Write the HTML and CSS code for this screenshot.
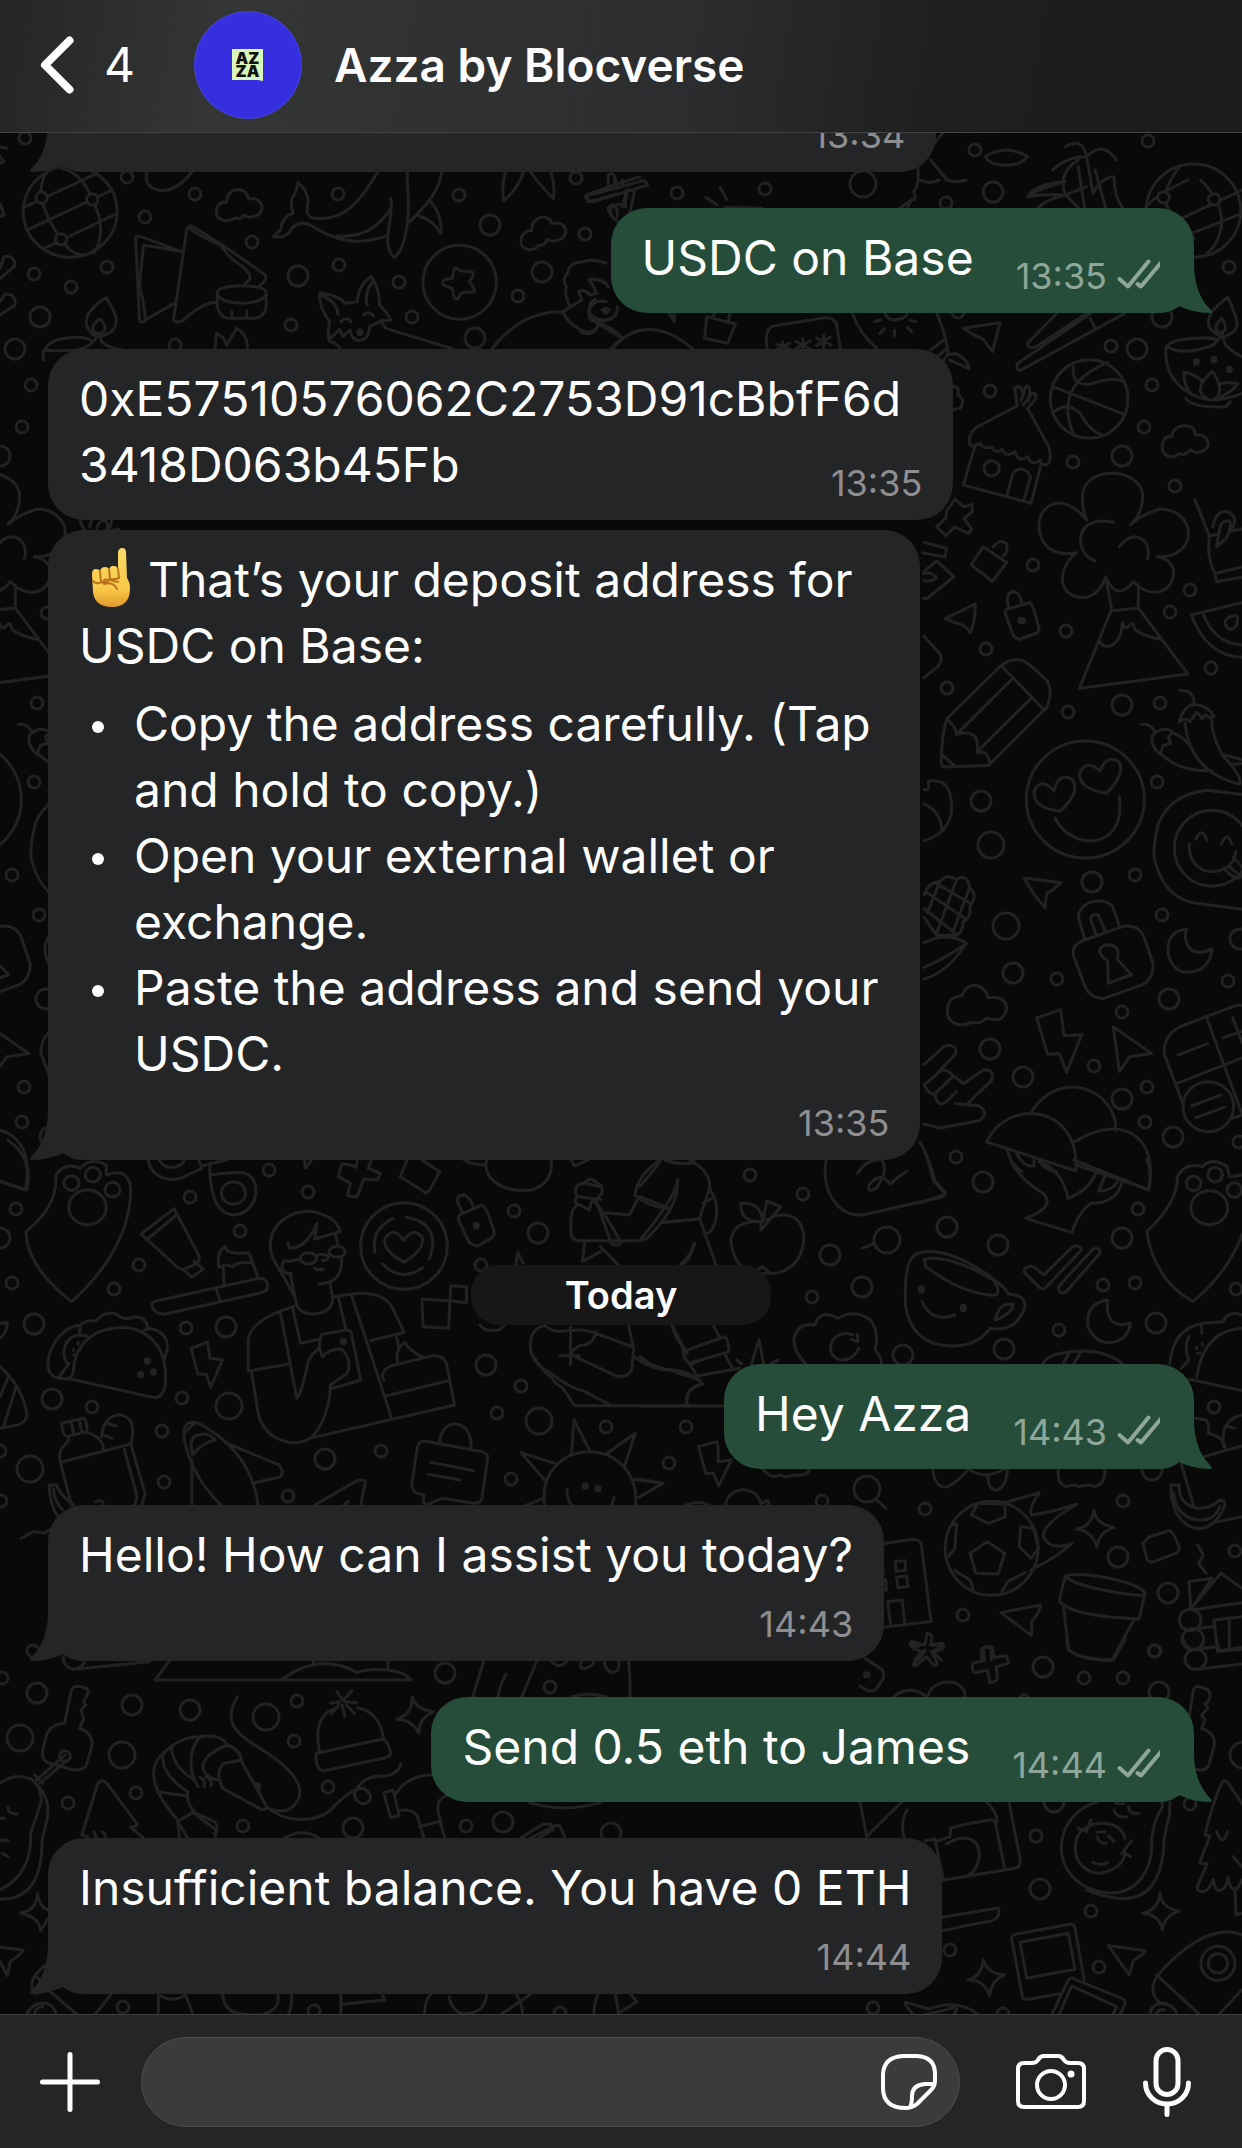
FILE: index.html
```html
<!DOCTYPE html>
<html lang="en">

<head>
  <meta charset="utf-8" />
  <title>Azza by Blocverse</title>
  <meta name="viewport" content="width=device-width, initial-scale=1">
  <link rel="stylesheet" href="styles.css">
</head>

<body>
  <svg class="defs" aria-hidden="true">
    <symbol id="tail" viewBox="0 0 52 62">
      <path d="M34 0V10C34 36 41 49 51 59Q53 62 50 62C38 62 28 59 19 55C14 59 8 62 0 62V0Z" />
    </symbol>
    <symbol id="ticks" viewBox="0 0 48 30">
      <path d="M2.500 20L11 27.500L31.500 2.500M20.500 25L24 27.500L45 2.500" fill="none" stroke="currentColor" stroke-width="4" stroke-linecap="round" stroke-linejoin="round" />
    </symbol>
  </svg>

  <header class="header">
    <a href="#" class="back" aria-label="Back, 4 unread chats">
      <svg class="back-icon" viewBox="0 0 34 58" aria-hidden="true"><path d="M29.500 4.500L5 29L29.500 53.500" /></svg>
      <span class="unread">4</span>
    </a>
    <svg class="avatar" viewBox="0 0 108 108" aria-hidden="true">
      <circle cx="54" cy="54" r="53.500" fill="#352fe0" stroke="#4a45e4" />
      <path d="M38 38H69V70L64 69H38Z" fill="#d9f7b8" />
      <text x="53.500" y="53">AZ</text>
      <text x="53.500" y="66">ZA</text>
    </svg>
    <h1 class="title">Azza by Blocverse</h1>
  </header>

  <main class="chat">
    <svg class="wallpaper" aria-hidden="true">
      <defs>
        <marker id="ring-s" markerUnits="userSpaceOnUse" markerWidth="40" markerHeight="40" refX="20" refY="20"><circle cx="20" cy="20" r="6" /></marker>
        <marker id="ring-m" markerUnits="userSpaceOnUse" markerWidth="40" markerHeight="40" refX="20" refY="20"><circle cx="20" cy="20" r="10" /></marker>
        <marker id="ring-l" markerUnits="userSpaceOnUse" markerWidth="40" markerHeight="40" refX="20" refY="20"><circle cx="20" cy="20" r="13" /></marker>
      </defs>
      <g class="doodles" transform="translate(0 -133)">
        <!-- small, medium and large rings -->
        <polyline class="rings-s" points="25,138 127,177 195,194 145,217 107,267 34,274 71,287 252,242 338,194 339,265 399,282 412,317 291,325 175,345 459,195 576,178 585,234 518,296 677,193 765,189 946,203 1229,267 1111,346 990,391 1152,385 1144,427 1073,462 1175,486 958,312 31,385 22,427 47,613 1033,565 1190,590 1170,612 1066,631 986,649 1211,668 947,688 1068,712 1160,703 1157,782 1135,875 1162,915 1057,979 1228,981 1122,1012 1094,1066 1147,1087 1145,1122 1239,1142 956,1157 34,782 37,703 12,875 39,915 24,1087 22,1122 16,1209 12,1283 114,1289 139,1265 190,1197 269,1170 308,1192 240,1231 186,1328 182,1398 92,1407 162,1431 164,1482 288,1496 381,1451 514,1211 481,1265 521,1386 497,1413 511,1479 606,1427 686,1427 669,1463 0,1451 1,1501 750,1175 803,1194 1138,1209 812,1297 1103,1285 1135,1283 1059,1330 1236,1289 822,1501 925,1509 1123,1501 963,1615 1154,1651 1235,1551 1214,1407 33,1651 2,1678 297,1701 294,1741 136,1793 68,1803 328,1787 243,1826 550,1687 466,1826 123,2007 314,2011 560,2013 1084,1678 1123,1678 1155,1651 1036,1836 1091,1911 1099,1967 950,1950 873,2008 1003,2014 1190,1804 975,150 1148,141" />
        <polyline class="rings-m" points="40,317 15,349 298,276 490,225 542,272 475,338 993,192 1162,317 1137,349 1122,456 0,456 1122,705 981,801 1092,882 1013,973 1169,999 46,999 990,1049 1023,1077 1122,1099 1173,1137 50,1137 1240,939 34,1324 52,1399 226,1327 538,1233 486,1365 325,1459 0,1238 983,1182 830,1255 947,1227 998,1245 1122,1238 862,1287 903,1355 1004,1349 1156,1323 1118,1557 1168,1593 1152,1470 37,1693 132,1705 190,1710 445,1673 353,1828 503,1822 611,1833 1043,1667 1159,1692 1040,1889 1054,1802" />
        <polyline class="rings-l" points="863,184 991,845 1006,926 229,1406 30,1469 539,1421 887,1240 867,1489 20,1738 266,1717 122,1755 1243,1755" />

        <!-- globe, whale, samosas, corgi, badge -->
        <g id="top-left" transform="translate(0 120) scale(.4082 .3333)">
          <ellipse cx="172" cy="275" rx="115" ry="137" />
          <path d="M62 260L238 160M70 328L275 210M108 385L284 282M100 230Q100 150 135 140Q200 150 226 238Q265 330 230 400M102 235Q110 290 150 358Q175 405 205 405" />
          <ellipse cx="102" cy="233" rx="14" ry="17" class="solid" /><ellipse cx="226" cy="238" rx="14" ry="17" class="solid" /><ellipse cx="150" cy="358" rx="14" ry="17" class="solid" />
          <path d="M360 156C350 200 380 214 405 211Q440 205 470 156" />
          <path d="M556 246C552 200 607 198 608 236C650 228 654 290 612 292Q603 290 597 286Q588 300 576 294C560 308 526 305 530 268Q534 245 556 246Z" />
          <path d="M1303 332C1300 285 1350 280 1352 312C1390 295 1400 355 1362 362Q1350 366 1342 357Q1335 378 1320 376C1305 400 1270 390 1277 355Q1284 330 1303 332Z" />
          <path d="M925 156C880 250 840 305 770 295Q745 290 755 250Q755 210 730 188Q728 215 715 235Q712 260 718 280Q690 290 688 330Q670 345 670 350H690Q705 348 715 325Q735 300 760 315Q830 370 890 363Q930 358 950 345M825 347Q910 360 960 260M957 235C965 260 948 330 950 370Q955 405 966 412Q990 390 998 310C1006 250 995 200 998 156M1004 305C1050 250 1075 210 1083 156M1052 240Q1085 285 1080 340Q1060 300 1027 288M1238 156Q1228 200 1234 242Q1270 205 1282 156M1300 156Q1325 200 1356 235Q1360 195 1350 156" />
          <path d="M332 360Q330 345 345 350L446 395L352 375Q345 440 342 500Q355 560 356 600L430 548M332 360L342 600Q345 612 356 602M425 600L458 325Q465 312 475 322L545 375L650 465Q655 475 645 488L635 498M425 600Q430 612 450 600Q500 545 530 548M465 325Q490 350 540 375Q565 420 590 435Q620 465 610 480L600 492" />
          <path d="M532 518C532 490 652 490 652 518C652 560 532 560 532 518V560Q540 595 560 595H625Q650 590 652 560V518M568 595V572M604 595V572" />
          <ellipse cx="1126" cy="487" rx="90" ry="111" />
          <path d="M1112 450Q1115 435 1126 452L1152 455Q1165 457 1157 470L1150 485L1163 510Q1160 522 1145 515L1130 520L1122 535Q1112 540 1110 520L1108 505L1087 495Q1080 485 1092 478L1108 475Z" />
          <path d="M835 690Q828 670 808 665Q800 640 808 605Q780 560 783 520Q830 525 845 550L875 545Q880 490 910 470Q930 510 930 555Q950 580 957 600L932 602L945 625L1110 687M790 527Q825 545 828 582M915 480Q890 520 900 555M810 655L832 628L840 650L858 630Q860 660 880 662Q905 658 905 620L930 605M835 605Q848 588 860 605M890 585Q905 570 915 588" />
          <path class="dot" d="M882 635V638M1484 570V572" />
          <path d="M260 533Q205 575 212 615Q222 650 245 648Q290 640 284 590Q275 560 260 533M244 597Q218 620 232 638Q255 645 258 622Q255 605 244 597M238 650Q225 680 190 690Q130 695 110 690M110 690C120 645 220 645 225 665M246 655Q250 680 300 690M106 690V720" />
          <path d="M527 687L530 640L548 655L555 675L580 625Q608 645 606 687M1205 687Q1280 570 1378 576Q1395 620 1440 638Q1465 632 1465 610Q1500 620 1524 655M1500 687Q1530 640 1570 630M1378 576L1425 540L1418 515Q1430 505 1445 525L1462 520L1445 480Q1470 470 1490 500M1398 562Q1380 520 1388 500Q1375 480 1390 460Q1395 425 1430 425Q1450 415 1485 430M1485 545Q1455 535 1443 570Q1440 605 1480 603Q1515 595 1512 560" />
          <path d="M1440 238Q1430 225 1445 220L1568 170M1440 245L1490 230L1510 222M1490 195V165Q1505 150 1510 190M1525 260L1535 210M1500 290Q1480 265 1500 255Q1515 260 1512 290" />
          <path d="M0 80L16 85M0 130L10 125L0 110M0 445L10 410Q40 405 35 440L0 475M0 545L12 523Q40 520 37 555L0 585M0 250L10 285L0 290" />
        </g>

        <!-- palms, parachute, cocktail, basketball, hut -->
        <g id="top-right" transform="translate(580 180) scale(.4222 .3333)">
          <path d="M12 50Q20 70 40 62L160 15Q155 -5 140 5L12 50M80 0L90 25M100 0V18M130 30L115 115M115 30Q105 60 108 80Q90 65 72 85Q70 110 90 125M298 52L325 75M332 22L347 58M345 82L430 85" />
          <path d="M620 -141Q650 -90 720 -95Q770 -105 785 -141M800 -40Q805 20 790 35Q800 60 785 60L758 84M785 60L775 84M805 0Q830 15 850 0M800 -40Q830 -100 860 -141M830 -60L870 0Q890 10 915 0M960 -70Q1010 -110 1060 -70Q1040 -40 1000 -45Q970 -45 960 -70M1060 50Q1080 10 1150 5Q1080 30 1060 50Q1100 40 1150 45Q1110 55 1085 82M1150 45Q1130 -20 1180 -60M1150 45L1180 82M1180 -40L1195 84M1220 -30L1245 84M1150 45L1200 20M1265 -10Q1265 50 1285 84M1215 40Q1230 0 1260 -10M1150 -100Q1190 -130 1200 -70Q1240 -120 1270 -60M1200 -70Q1150 -70 1120 -30M1200 -70L1215 40" />
          <ellipse cx="1453" cy="92" rx="112" ry="140" />
          <path d="M1345 75Q1370 40 1440 0M1400 130L1568 30M1430 170L1568 100M1382 52Q1395 0 1420 -40M1382 60Q1410 130 1455 175M1470 0Q1520 60 1520 130Q1515 190 1485 220" />
          <ellipse cx="1382" cy="52" rx="14" ry="17" class="solid" /><ellipse cx="1502" cy="58" rx="14" ry="17" class="solid" />
          <path d="M645 398Q660 460 705 507M845 398Q870 480 872 520L858 550M830 510L862 480M845 530L870 505M872 525L890 520Q920 540 922 567L875 540M722 398Q730 425 750 418Q775 415 775 398M698 425L712 420M710 460L722 445M745 468V450M785 455L775 442M795 425L782 420" />
          <path d="M443 507Q435 445 460 437L580 413Q600 412 607 430L617 507M480 485V507M465 492L497 507M497 490L468 505M528 475V507M512 485L545 507M545 483L512 505M577 465V503M560 475L595 495M593 472L560 497M300 410L368 432L350 490L295 475ZM315 408L320 398M352 420L355 398M210 398L223 425V398M72 507Q160 390 267 507M22 400Q20 420 35 425M40 428L100 475M0 455Q35 475 45 430M52 390H70M20 300Q35 290 62 310M35 358Q20 365 22 400Q50 435 80 410" />
          <path d="M908 445L995 428L977 515L955 478Q930 465 908 445ZM1130 400L1060 490Q1060 510 1080 500L1200 400M1290 400L1045 570Q1030 570 1037 550L1210 400M1208 415L1220 443" />
          <path d="M1535 352Q1480 400 1490 440Q1510 475 1530 468Q1570 450 1550 400ZM1520 415Q1495 445 1515 458Q1540 455 1520 415M1388 500C1410 470 1500 470 1505 480Q1520 478 1522 460M1390 500Q1430 530 1500 495L1512 478M1388 500C1380 600 1440 650 1490 660Q1530 660 1568 640M1525 470Q1520 500 1568 530M1430 577Q1455 580 1475 605Q1485 590 1497 573Q1510 595 1513 612Q1540 605 1558 612Q1540 640 1510 655M1475 605Q1460 640 1485 655M1513 612Q1520 640 1505 655M1430 577Q1430 620 1450 645M1435 655Q1450 685 1530 680L1540 665" />
          <path class="dot" d="M1460 545V547M1502 538V540M1538 567V569" />
          <ellipse cx="1206" cy="657" rx="92" ry="118" />
          <path d="M1120 620L1290 703M1250 548C1150 600 1140 680 1170 765M1168 560Q1165 620 1210 612Q1260 590 1290 605M1120 700Q1150 660 1185 700Q1205 750 1235 765" />
          <path d="M1035 678L1030 625Q1045 605 1050 650M1045 660L1057 618Q1070 615 1062 665M1050 675L1070 640Q1095 640 1060 685L1110 800Q1120 840 1105 855Q1090 855 1090 840Q1070 860 1060 830Q1040 850 1030 815Q1010 835 1000 808Q985 825 975 800Q955 810 948 790Q920 810 922 780Q925 750 945 738L1035 678M935 800L908 915L1068 970L1092 855M1012 945L1025 880Q1050 850 1067 890L1052 960" />
          <ellipse cx="975" cy="865" rx="18" ry="23" />
          <path d="M1402 770C1400 735 1455 720 1458 765C1495 760 1500 815 1460 818L1445 810Q1430 830 1420 820C1395 845 1375 820 1380 790Q1385 765 1402 770ZM880 620Q900 615 895 645Q915 660 900 685L880 690" />
        </g>

        <!-- tree, volcano, pencil, smileys, padlock, mushrooms -->
        <g id="mid-right" transform="translate(840 500) scale(.3333 .4464)">
          <path d="M290 60L318 40L320 25L345 -2L370 15L395 10L398 25L372 42L395 65L385 75L365 68L345 60L318 80ZM460 105Q480 85 500 98Q505 115 490 125M430 105L500 140L457 182L393 145ZM252 95L320 108L315 128L248 118M252 160L290 137L342 172L262 220L250 220M252 180Q270 185 290 175Q275 160 250 165" />
          <path d="M740 45Q725 20 728 -15C740 -75 890 -75 908 -15Q910 30 872 55M740 45C660 -30 580 20 600 75Q620 130 710 118C640 160 660 225 740 218Q780 210 797 172Q830 230 880 183C940 230 1010 200 1000 155Q990 130 952 127C1080 130 1070 20 960 20Q900 35 872 55M820 50C700 30 700 120 765 136M838 105C880 60 940 90 922 132M797 172L816 248L895 242L895 190M813 248L718 422L1044 390L895 242M778 315Q790 335 815 325Q845 315 847 275Q855 295 870 280Q880 270 885 290Q910 305 960 312" />
          <path d="M316 265L406 233Q405 280 390 297Q380 280 345 275ZM505 238Q495 208 520 205Q540 208 545 230M500 245L570 230Q580 235 596 285Q600 295 590 298L540 312Q525 312 518 300L498 258Q492 248 500 245M252 305L300 345Q308 360 295 372L252 398" />
          <path class="dot" d="M543 270H548" />
          <path d="M320 490L485 370Q530 345 570 370L622 405Q640 430 620 465L445 595L310 598Q302 595 304 580Q305 530 320 490ZM485 372L612 470M515 402L350 525M572 445L410 565M320 490Q345 505 350 525Q420 510 412 565Q445 560 450 590M308 572L345 596" />
          <ellipse cx="736" cy="671" rx="177" ry="131" />
          <path d="M662 697Q575 690 583 650Q605 620 642 652Q655 610 695 625Q725 650 662 697ZM800 657Q710 645 720 610Q740 580 780 607Q800 570 835 585Q860 610 800 657ZM645 712C690 785 860 790 838 665" />
          <path d="M1020 427Q1065 425 1062 460M1018 497Q1030 460 1065 458Q1105 460 1122 485L1105 487Q1095 475 1088 490L1070 475L1050 497Q1035 485 1018 497M1035 500Q1050 610 1200 637Q1205 615 1150 575Q1115 530 1115 490M905 503Q930 500 945 520M960 570Q925 545 940 525Q970 505 1000 520L985 530L992 545L970 550ZM965 570Q1020 610 1115 606M1000 522Q1030 530 1055 555M1150 570L1206 582M1206 590L1175 592" />
          <path d="M1206 660L1100 650Q990 660 955 725Q935 790 945 810Q975 890 1060 902L1206 917" />
          <ellipse cx="1116" cy="780" rx="113" ry="85" />
          <path d="M1048 770C1040 850 1180 850 1188 787M1068 760Q1085 730 1101 762M1145 770Q1160 740 1175 770M1150 825L1180 845Q1200 850 1206 840M1180 800L1206 822M1166 820L1190 835" />
          <path d="M252 648Q270 655 265 630Q340 620 335 700Q320 750 252 763M252 680Q305 700 305 738M252 885Q265 855 300 855Q320 835 350 850Q380 835 390 870Q415 885 390 910Q395 935 370 945Q365 975 345 975H290L252 935M262 880L380 940M290 860L395 905M252 915L345 970M350 850L290 970M300 855L262 925M388 870L340 965M252 992Q320 965 380 993Q320 1060 252 1073M252 1047Q310 1030 380 993" />
          <path d="M553 847L663 857Q630 880 620 880L615 913Q575 880 553 847ZM735 985L715 935C720 890 810 890 820 915L838 955M768 972L752 940Q755 925 775 930L797 968M700 1020Q695 995 735 985L850 955Q900 950 915 985L940 1040Q940 1070 910 1085L790 1117Q750 1115 735 1090ZM803 1032C755 1010 790 990 820 998Q840 1005 832 1030L875 1063L805 1083ZM1040 962C960 960 970 1060 1045 1058Q1110 1055 1116 1005Q1050 1030 1035 980Z" />
          <path d="M365 1110Q380 1085 410 1087Q440 1095 445 1115Q500 1110 500 1140Q490 1175 440 1160Q420 1175 395 1170Q350 1185 325 1160Q310 1115 365 1110ZM590 1160L662 1142L672 1200L725 1198L680 1282L658 1240L623 1242ZM820 1180L935 1240L870 1247L838 1280Z" />
          <path d="M252 1265L310 1225Q350 1215 348 1240L285 1290Q310 1265 340 1290L370 1307L430 1277Q465 1275 455 1300L383 1352M285 1290L252 1310Q270 1335 285 1330L340 1290M285 1330Q290 1360 315 1350L350 1325M345 1352L415 1357Q450 1370 420 1390L300 1407L252 1398" />
          <path d="M440 1438C500 1340 720 1350 708 1503ZM575 1370C660 1270 830 1320 828 1413M705 1437C850 1370 960 1430 925 1545L710 1490M502 1457Q510 1485 545 1505M600 1480Q610 1500 650 1505M530 1463Q550 1495 582 1492V1478" />
          <path d="M240 1438Q265 1470 285 1525L315 1555L240 1575" />
          <path d="M1206 1132Q1190 1130 1170 1137L1020 1180Q970 1200 972 1240L1030 1355M1100 1160L1206 1375M1012 1307L1206 1250M1015 1243L1103 1218M1150 1205L1206 1190M1178 1160L1206 1215M1175 1385L1206 1378" />
          <ellipse cx="1105" cy="1359" rx="76" ry="56" />
          <path d="M1055 1357L1142 1333M1067 1384L1154 1360" />
          <path d="M1065 0L1108 80Q1100 130 1125 165L1130 183L1206 173M1108 80L1130 78M1125 165L1206 150M1118 60Q1130 20 1165 27Q1200 40 1170 70L1206 65M1130 105L1160 85Q1180 50 1165 47Q1145 45 1140 62ZM1054 257L1206 230M1054 257Q1100 350 1206 352M1088 252Q1120 320 1206 325M1180 260Q1200 255 1190 280Q1170 300 1155 278Q1155 262 1180 260" />
        </g>
        <use href="#mid-right" x="-1123" />

        <!-- paw, toothpaste, cake, man with phone, taco, sun -->
        <g transform="translate(0 1140) scale(.4464 .3333)">
          <path d="M58 275Q130 200 125 105Q145 65 180 85Q200 50 238 75V105Q290 80 293 150Q290 330 160 485Q60 380 58 275Z" />
          <ellipse cx="160" cy="129" rx="17" ry="22" /><ellipse cx="208" cy="104" rx="17" ry="22" /><ellipse cx="252" cy="149" rx="17" ry="22" /><ellipse cx="196" cy="202" rx="42" ry="52" />
          <path d="M18 0C60 40 70 100 60 150L0 125M332 60C340 120 390 130 420 105L452 85L445 60M357 60Q365 85 390 82Q410 75 413 60M452 78L507 60M470 75V105Q520 95 545 98C590 110 580 225 522 225C485 220 475 170 470 105" />
          <ellipse cx="523" cy="159" rx="27" ry="34" />
          <path d="M316 282L390 206L445 345Q450 365 435 375L410 388Q395 385 388 370ZM328 300L398 222M435 365L455 387L430 412L412 390M490 380Q485 330 505 320Q505 345 555 338Q565 350 563 368Q530 365 520 380Q505 370 497 380Q488 380 490 380M500 385L502 435M565 365L578 415M340 495Q340 483 360 480L580 415Q600 415 600 440Q598 455 580 460L370 522Q345 525 340 495M485 450L493 483" />
          <path d="M682 60L684 85L698 60M765 72Q780 70 798 82L800 60M832 60L825 85L852 100L845 120L815 118L800 170L778 168L785 130L758 110L765 72M912 60L897 110L955 160Q965 150 985 95L945 60M1040 60Q1060 75 1085 75M1090 60C1080 110 1120 160 1190 150Q1240 130 1235 60M1280 60L1287 78L1318 60" />
          <path d="M606 330C600 230 680 200 715 220Q755 235 762 275L705 297L710 250Q695 295 680 310Q665 325 648 325L645 308M606 330Q610 360 640 420L660 470M652 362L672 358M650 365Q630 355 632 385Q638 405 652 400M650 400L662 478Q665 520 700 522Q745 520 745 475L740 432M765 350Q770 430 715 432M752 285L757 315M705 385Q712 393 724 387M722 360Q732 365 735 350M710 347Q720 338 735 348" />
          <ellipse cx="691" cy="355" rx="18" ry="17" /><ellipse cx="755" cy="335" rx="18" ry="16" />
          <path d="M658 500Q560 540 556 600V693L648 672M628 517L665 775Q675 760 688 680Q690 650 715 625L718 590Q720 582 735 580L775 570Q785 570 787 580L808 720L740 747M655 500L673 610L715 598M722 650Q740 625 765 627Q790 660 778 700L740 735Q738 830 700 890Q680 910 650 908Q580 890 575 790L563 693M722 650L715 620M758 472L775 570M748 470L800 460Q860 455 880 505L905 578L830 602M788 468L877 833M888 588L893 620M700 893L1018 795L1000 670Q990 640 960 650L875 678Q850 695 860 720M890 665Q885 625 908 607Q915 630 945 650M867 767L1005 722" />
          <path class="dot" d="M769 604V606M330 662V664M344 695V697M315 703V705" />
          <ellipse cx="905" cy="318" rx="97" ry="130" />
          <path d="M905 367Q850 325 865 290Q885 260 904 302Q925 260 945 290Q955 325 905 367ZM840 337Q830 270 880 235M910 232Q990 250 962 357M857 372Q900 430 947 382M1026 190Q1020 165 1040 165Q1055 175 1060 200M1026 190L1035 215M1030 225L1080 195Q1090 200 1107 275Q1108 290 1100 295L1070 318Q1060 318 1050 305L1027 240Q1025 228 1030 225M945 478L1008 482L1005 565L948 560ZM1008 482L1010 437L1045 440V488Z" />
          <path class="dot" d="M1067 256V258" />
          <path d="M130 715C80 700 120 560 180 555Q190 540 215 543Q235 510 260 522Q280 545 300 530Q330 530 330 565Q375 570 375 625L368 660M150 715L345 773Q365 775 370 735C380 600 310 550 255 565C190 575 165 640 165 690M180 555L178 585Q145 590 143 640Q145 670 155 670L130 715L152 717Q165 710 165 685M195 587L178 585M320 573L335 565M175 607V613M165 628V632M180 625V630M165 645H172" />
          <path d="M428 625L465 606L470 655L498 660L472 742L462 703L443 702ZM0 550L17 548Q15 580 0 595M0 680Q50 740 60 820Q60 850 40 855L0 865M18 712L0 770M35 745L8 860" />
          <path d="M138 850L185 835Q195 835 195 875L150 890Q140 885 138 850M160 850L165 880M178 845L183 875M153 892Q155 905 145 915Q130 930 135 965L160 1095M195 878Q230 890 232 930M228 890C230 820 280 805 295 850Q300 880 293 910M240 850L260 858M232 885L252 895M137 967L293 912L325 1060L318 1095M277 920L307 1070L302 1095M110 1035H128Q130 1060 165 1095M110 1035Q112 1100 130 1130M120 1045Q120 1080 140 1110M215 1085Q230 1075 232 1095M48 1195L75 1175L100 1180L110 1170" />
          <path d="M413 900C405 830 440 840 470 870C530 920 570 1000 578 1095M413 900Q430 1010 495 1095M413 880L435 850M432 945Q420 890 445 885Q465 875 482 900Q450 910 432 945M505 908L625 975Q640 1000 625 1012L565 1030M430 960V1095M705 1095L800 1022Q820 1015 818 1030L808 1095M770 1095L780 1085" />
          <path d="M985 910C985 830 1060 830 1055 925M950 903L1080 935Q1095 940 1092 960L1080 1070Q1080 1090 1060 1090L990 1075L955 1095Q945 1090 950 1065Q920 1060 923 1030L935 920Q940 903 950 903M965 967L1060 992M960 1003L1030 1020" />
          <path d="M1220 1095C1210 1000 1260 935 1320 935C1380 935 1430 1000 1424 1095M1280 945L1286 840L1322 935M1358 942L1423 880L1400 975M1417 1018L1485 1030L1424 1077M1248 972L1167 938L1223 1025M1218 1075L1180 1095M1270 1047Q1270 1080 1280 1095M1376 1073L1370 1095" />
          <path class="dot" d="M1311 1037V1039M1340 1045V1047" />
          <path d="M1290 145Q1295 130 1310 130Q1320 105 1338 130Q1352 135 1348 160L1335 180M1310 130L1345 140M1290 145Q1288 165 1295 170L1345 178M1290 175Q1285 195 1300 195L1320 210L1325 185M1290 200Q1275 210 1280 290Q1290 305 1310 302H1430Q1450 300 1460 280Q1520 200 1518 120M1330 180Q1360 230 1390 305Q1390 320 1370 312L1335 180M1358 218L1410 225L1430 175M1422 165Q1430 100 1480 60M1422 165Q1450 200 1493 205M1480 248L1568 237M1490 60Q1520 75 1550 70L1555 60M1310 305L1305 365M1345 320L1385 375M1305 365L1345 335M1155 375L1160 337L1172 370M1555 310Q1550 350 1530 375M1075 555Q1090 580 1120 568L1130 555" />
          <path d="M1190 640Q1180 570 1220 557Q1240 580 1270 572Q1310 565 1335 580L1420 622L1415 690Q1405 715 1380 708L1280 645M1335 575Q1330 610 1310 615Q1290 615 1280 640M1255 647H1298M1278 560V672M1408 555L1418 620M1420 650Q1460 690 1500 690L1568 720M1190 640Q1200 680 1235 700Q1270 740 1310 755L1370 797M1190 640Q1220 700 1235 712Q1250 740 1260 742L1287 797H1568M1505 555Q1520 600 1540 640M1530 625Q1535 675 1550 672L1568 660M1568 735Q1530 750 1540 797" />
        </g>

        <!-- apple, cup, cloud, football, pot, log cabin -->
        <g transform="translate(640 1160) scale(.3839 .3333)">
          <path d="M315 185Q245 180 237 240Q240 310 290 340H355Q425 320 427 230Q420 150 350 168L330 180M315 185Q260 185 263 130Q315 125 320 185L330 123L367 140L315 210ZM290 340L320 320L340 340M485 0C470 100 520 170 580 165L790 110Q800 100 790 90L765 65L750 0M567 40Q590 -5 630 0Q650 30 615 85Q590 100 597 75Q615 45 637 55L653 72Q670 50 695 35M578 265L607 252M130 0Q190 40 180 90L155 175L198 315M180 85Q210 130 195 190Q185 220 175 220M165 130L187 115M55 187L155 177M97 60Q95 110 0 240M75 145L0 110M143 250Q130 290 105 315M0 80L50 10" />
          <path d="M692 440Q685 300 722 280Q790 255 900 340Q950 380 960 402Q1005 405 1003 440Q980 520 912 505Q880 555 820 558Q710 560 692 440ZM740 298Q800 280 920 360Q950 410 910 405Q830 395 745 320ZM948 435L973 432Q970 460 925 480Q930 450 948 435M735 425Q760 490 820 465" />
          <path class="dot" d="M733 385V389M842 442V446" />
          <path d="M1000 335Q1005 315 1025 320L1052 345L1125 262Q1145 250 1150 270L1055 385Q1048 390 1040 382ZM1090 380L1180 267Q1200 260 1198 280L1110 395Q1090 408 1090 380M1218 420Q1160 430 1167 500Q1190 560 1240 545Q1275 530 1277 490Q1210 510 1218 420Z" />
          <path d="M432 612Q380 550 415 505Q430 490 455 495Q470 445 515 475Q560 445 600 480Q625 520 612 570Q630 590 628 612M570 565C545 625 480 600 500 545Q520 510 555 525M550 538L567 545V522M252 600L265 612M290 612L310 540L322 612M340 612L360 600M1050 612Q1060 575 1160 573Q1220 575 1257 612M1102 612L1118 578M1130 612L1147 578" />
          <path d="M112 575L220 530Q230 535 232 575L128 610Q115 600 112 575M130 612L148 648L260 625M220 580L242 628M82 495Q95 540 118 570M190 495L208 532M0 590Q40 630 90 630Q140 640 163 672Q120 680 122 735M0 738H225" />
          <path d="M152 860L200 845Q205 850 203 905L238 900L205 978L190 938L172 942ZM0 958L60 970L0 1010M222 1035C230 980 300 970 315 1030L332 1022Q340 1030 332 1035M120 1035Q150 1020 180 1035M320 927Q340 960 365 945Q380 955 400 945Q440 950 440 927M762 927Q770 990 800 980Q825 970 855 927M860 930Q900 960 950 927M907 945Q905 990 930 990Q955 980 957 930M1090 927Q1085 970 1110 980Q1130 970 1145 980Q1165 970 1185 980Q1215 970 1210 927M615 1018L640 1045" />
          <path d="M965 0Q990 60 1050 100Q1085 140 1005 175L1125 218Q1145 150 1175 130Q1240 130 1255 70M1040 5Q1100 30 1115 115Q1170 90 1187 40M1130 0L1325 90Q1335 40 1320 0M1210 50L1195 93Q1225 95 1245 65M1320 215Q1400 130 1400 50Q1420 5 1465 20Q1490 -10 1530 20L1535 50L1568 45M1320 215Q1340 360 1440 425Q1530 340 1568 225" />
          <ellipse cx="1442" cy="70" rx="19" ry="22" /><ellipse cx="1498" cy="44" rx="19" ry="22" /><ellipse cx="1548" cy="90" rx="19" ry="22" /><ellipse cx="1483" cy="143" rx="48" ry="51" />
          <ellipse cx="916" cy="1165" rx="121" ry="141" />
          <path d="M905 1145L950 1180L933 1242L875 1240L860 1180ZM880 1030L950 1032L952 1070L908 1090L863 1065ZM812 1095L825 1092L820 1165L803 1190M992 1100L1025 1105L1038 1165L1018 1195L988 1160ZM820 1232L860 1260L868 1290M942 1298L958 1265L1003 1238M945 1030L1040 998Q1010 1050 1020 1065Q1060 1060 1138 1033Q1050 1090 1050 1130Q1070 1175 1125 1150Q1090 1190 1018 1230M1183 1052Q1185 1090 1235 1103Q1195 1115 1190 1162Q1180 1115 1137 1108Q1175 1100 1183 1052ZM1310 1150L1325 1132L1378 1112Q1390 1115 1405 1165Q1405 1175 1395 1180L1340 1205Q1325 1210 1320 1195Z" />
          <path d="M630 1152L710 1138Q730 1138 733 1155L758 1385L632 1402M630 1207L635 1237M665 1205L690 1202L692 1230L667 1235ZM630 1260L640 1258L642 1290L632 1290M668 1252L695 1248L698 1280L672 1283ZM645 1325L683 1320L690 1392M645 1325L653 1398M940 1358L1043 1335Q1045 1350 1020 1385V1427ZM748 1420Q765 1420 757 1455L790 1460Q790 1475 762 1475L785 1500M748 1420L742 1455L705 1450Q700 1465 735 1475L715 1500M890 1500V1465Q910 1455 915 1470V1500" />
          <path d="M1108 1248C1150 1230 1320 1270 1315 1305C1280 1310 1130 1280 1108 1248ZM1108 1250Q1095 1300 1093 1325Q1130 1370 1300 1377L1315 1302M1103 1343L1117 1470Q1150 1500 1230 1500L1287 1378M1453 1155L1467 1185L1455 1210L1475 1240M1383 975H1405Q1400 1030 1450 1045Q1490 1045 1510 1020Q1525 1020 1523 1035C1490 1150 1380 1120 1383 975M1390 1000Q1400 1085 1470 1080Q1500 1075 1510 1040M1505 1085L1568 1070M1410 912L1443 1040M1435 1345L1430 1265L1490 1255L1440 1340L1513 1240L1568 1285M1435 1350L1568 1328M1455 1405L1495 1400M1465 1465L1500 1460M1495 1380L1568 1370M1495 1380L1505 1475L1568 1468M1535 1378V1472" />
          <ellipse cx="1433" cy="1380" rx="28" ry="32" /><ellipse cx="1440" cy="1438" rx="28" ry="32" />
          <path d="M1380 612Q1390 500 1470 490L1520 485Q1530 450 1568 465M1463 520V490M1430 530Q1415 560 1430 600M1430 600L1410 625M1430 658L1568 692M1450 650Q1470 510 1568 505M1445 775L1475 780Q1485 800 1480 820M1480 820Q1520 830 1525 865M1470 890L1568 858M1450 560V566M1465 550V556M1452 580H1460M1520 860Q1510 780 1568 765M1530 800L1550 805" />
        </g>

        <!-- key, prawn, hat, hammer, tree -->
        <g transform="translate(0 1640) scale(.4082 .3333)">
          <path d="M155 50Q155 85 185 88Q205 80 207 63M185 88L365 65M380 120L415 63M380 120H1007Q990 95 950 90Q900 85 875 97Q780 35 690 120M768 63V72M950 63V88M1158 171L1185 63M1220 171Q1225 130 1240 103M1278 171L1315 63M1350 63Q1370 90 1390 63M1425 63Q1415 90 1435 85Q1455 75 1455 63M1480 63Q1485 100 1505 97Q1520 90 1515 63M1540 63Q1545 120 1543 171M1400 171Q1440 155 1485 171" />
          <path d="M158 250L175 150Q180 135 200 140Q220 145 215 160L205 185L210 195L198 210L205 235L195 265Q230 280 225 320L210 380Q195 395 175 388L120 370Q100 360 105 330L115 280Q130 250 158 250ZM160 345L85 425M165 360L98 430M75 415L95 440M85 405L105 430" />
          <ellipse cx="159" cy="349" rx="13" ry="17" />
          <path d="M0 430Q40 395 80 420Q105 450 100 490L75 580Q80 700 0 750M95 440Q125 480 115 540L103 600Q105 750 30 775L0 778M20 500Q20 525 42 522M0 535H10M0 600L20 602M5 640L20 650M200 585L240 430Q250 415 262 430L335 550Q338 560 320 562L352 594M200 585L215 590M230 575L237 594M250 575Q260 580 257 594" />
          <path d="M435 540C370 450 360 380 400 340Q440 290 490 290Q540 280 558 315Q590 330 592 365L652 498Q655 510 640 508L545 445Q525 390 550 370L592 360M400 340Q390 400 460 455M420 325Q425 380 470 415M490 290Q455 340 475 420M558 315Q485 350 500 395Q515 420 540 420M385 455L458 468M435 545L472 518L530 570L528 594M460 455Q455 490 480 520L525 545Q540 565 525 580M440 594L435 545L460 594M475 415L485 440M490 412Q505 420 500 440M505 410Q522 420 517 437M582 170C540 250 590 290 630 320C700 370 750 430 730 480Q710 520 680 512Q660 510 652 500C700 550 770 550 810 510Q860 445 890 445Q910 460 908 475Q900 495 885 490Q865 480 870 455Q890 405 940 408Q975 405 983 370M650 495L625 430" />
          <path class="dot" d="M632 437V441" />
          <path d="M783 335Q765 230 820 205M875 203Q930 215 940 297M775 340L935 298Q950 297 957 340Q955 350 940 355L795 392Q770 390 775 340M840 180L825 155M842 180L862 152M845 185L875 188M838 195L845 230M830 195L812 222M832 185L810 190M848 195L868 220M1010 172Q1020 210 1062 215Q1025 235 1027 280Q1010 240 972 237Q1010 225 1010 172Z" />
          <path d="M940 458L963 450L978 527L957 533ZM970 460Q1000 405 1060 404M978 512Q1020 500 1028 550L1038 594M1078 545L1090 594M1028 560L1080 543Q1060 480 1095 467M1275 594L1330 553H1350L1355 570M1300 594L1355 560L1370 555L1383 590M1320 594L1350 572M1298 488Q1380 520 1470 488M698 594Q740 562 782 594" />
          <path d="M92 760Q95 800 118 810M92 760Q90 810 50 820Q95 830 100 872L118 835M0 922L57 930Q55 940 25 965L18 1007L0 965M118 970Q60 1020 85 1062L110 1050M118 1050L190 1125M90 1010L118 1050M65 1125Q80 1085 115 1090Q135 1100 138 1125M85 1125Q85 1100 105 1100M232 1125L272 1063M388 1062V1125M390 1065Q420 1090 455 1065L473 1125M545 1063C550 1130 600 1125 640 1125Q690 1110 680 1063M715 1063Q715 1110 705 1125M835 1063V1125M940 1080L840 1093M935 1063L943 1080M1040 1125Q1040 1080 1055 1063M1100 1070Q1110 1125 1145 1122Q1190 1115 1192 1063M1225 1125L1300 1063M1265 1063Q1280 1090 1280 1125M1455 1125Q1455 1090 1465 1063M1508 1063L1515 1120L1560 1085L1545 1063" />
        </g>

        <!-- pictures, avocado baby, fir, rocket -->
        <g transform="translate(860 1640) scale(.3333)">
          <path d="M175 20L150 15L155 3L180 12M195 30L185 50L160 72Q158 80 172 75L200 50L220 75Q235 80 230 65L215 35L250 20Q250 5 240 10L210 15M370 30Q370 20 385 20L397 22L402 52L440 48L445 70L408 80L412 115Q412 125 390 128L382 90L345 98Q335 95 338 70L375 62ZM620 0L625 30Q680 65 760 60L795 0M15 55L60 85Q75 95 70 115L50 145Q35 160 20 150L0 138M100 171Q150 130 200 171M205 165C220 110 320 115 315 171M480 171L492 163L505 171" />
          <path class="dot" d="M19 104H21" />
          <ellipse cx="1007" cy="58" rx="32" ry="30" />
          <path d="M970 0Q980 25 1000 28Q1030 25 1032 0M1035 25L1070 20M1070 0L1077 32L1146 22M1010 88L1146 72M988 230L1000 150Q1005 135 1025 142L1045 150Q1055 160 1045 185L1035 190L1043 205L1025 225L1035 240L1025 265Q1070 280 1062 320L1045 380Q1030 395 1010 388" />
          <path d="M0 486L20 590L125 486M142 510Q120 540 132 592M195 602L225 598L250 720L435 690M225 605L270 590L272 565Q280 558 390 540Q405 538 407 552L435 690L465 685Q485 680 480 655L447 486M380 486Q415 520 410 550M260 612C310 580 360 590 358 650Q350 700 310 712M246 832L415 804Q425 840 380 845L246 872" />
          <path d="M710 486C600 520 580 640 630 700C670 755 780 790 840 720Q880 670 875 600Q880 540 908 500L905 486M930 486Q930 530 920 560Q910 600 910 640Q890 790 770 775Q710 765 680 750M762 510Q770 535 800 530M805 500Q810 525 838 520M765 488Q780 495 792 490" />
          <path d="M795 595C780 530 670 540 650 595C630 670 690 710 735 697Q790 680 795 640L812 650M795 630L785 640L815 602M693 540L680 575L655 565M698 667Q720 680 743 668M710 577L735 575M745 587L762 605M712 590Q715 612 740 610" />
          <path d="M1035 585Q1060 480 1085 430Q1095 415 1105 430L1146 490M1035 585L1050 588L1020 665Q1015 672 1042 670L1012 740Q1010 755 1030 755Q1050 750 1060 718Q1065 755 1080 752Q1100 745 1105 712Q1110 755 1130 748Q1140 735 1146 720M1125 745L1128 825L1146 820M1070 575Q1090 625 1102 575M1120 650L1146 680" />
          <path d="M900 760Q905 805 958 813Q910 830 907 870Q900 825 848 820Q895 810 900 760ZM370 960Q380 1000 433 1005Q395 1020 388 1068Q375 1020 325 1020Q365 1010 370 960ZM745 917L855 932Q850 945 820 962L808 1005ZM455 895Q455 885 470 882L630 853Q642 850 645 865L673 1022M455 895L487 1070Q490 1080 505 1078L597 1062M480 907L625 880L645 988L500 1015ZM575 1125L625 1020Q632 1010 645 1018L785 1075Q800 1082 795 1092L780 1125M597 1125L635 1038L770 1100L758 1125" />
          <path d="M890 1010Q1000 880 1100 875Q1125 875 1146 885M890 1010Q870 1050 885 1070Q895 1090 910 1092L920 1090M890 1005L1020 1125M870 1125Q870 1095 905 1090Q945 1095 952 1125M888 1125Q895 1105 915 1110M1075 1125L1146 1050M137 1095Q130 1080 155 1092L205 1107Q300 1075 355 1125M137 1095L160 1125M190 1125Q260 1110 290 1100Q290 1115 280 1125" />
          <circle cx="1074" cy="970" r="51" /><circle cx="1074" cy="970" r="29" />
        </g>
      </g>
    </svg>

    <div class="message in stacked earlier">
      <time class="time">13:34</time>
      <svg class="tail"><use href="#tail" /></svg>
    </div>

    <div class="message out">
      <p class="text">USDC on Base</p>
      <time class="time">13:35</time>
      <svg class="ticks" role="img" aria-label="Delivered"><use href="#ticks" /></svg>
      <svg class="tail"><use href="#tail" /></svg>
    </div>

    <div class="group">
      <div class="message in overlap">
        <p class="text">0xE57510576062C2753D91cBbfF6d<br>3418D063b45Fb</p>
        <time class="time">13:35</time>
      </div>
      <div class="message in stacked">
        <div class="text">
          <p><svg class="emoji" viewBox="0 0 38 59" role="img" aria-label="Pointing up">
              <defs>
                <linearGradient id="skin" x1="0" y1="0" x2="0" y2="1">
                  <stop offset="0" stop-color="#fbdc68" /><stop offset=".7" stop-color="#f8c848" /><stop offset="1" stop-color="#e09a2c" />
                </linearGradient>
              </defs>
              <path fill="url(#skin)" d="M26 4Q27 0 30 0Q34 0 34 4L35 30Q38 34 38 41C38 53 31 59 20 59C9 59 2 54 1 44L0 26Q0 21 4 21Q7 21 8 23Q9 19 13 19Q16 19 17 21Q19 17 22 18Q25 18 26 21Z" />
              <path fill="none" stroke="#b9731d" stroke-width="2" stroke-linecap="round" d="M8 23L9 34M17 21L18 31M26 21L27 30M1 33Q5 37 9 34Q14 36 18 31Q22 32 27 30M11 35Q11 30 18 32L26 34M12 36Q21 33 25 41" />
            </svg>That’s your deposit address for<br>USDC on Base:</p>
          <ul class="steps">
            <li>Copy the address carefully. (Tap<br>and hold to copy.)</li>
            <li>Open your external wallet or<br>exchange.</li>
            <li>Paste the address and send your<br>USDC.</li>
          </ul>
        </div>
        <time class="time">13:35</time>
        <svg class="tail"><use href="#tail" /></svg>
      </div>
    </div>

    <h2 class="date">Today</h2>

    <div class="message out">
      <p class="text">Hey Azza</p>
      <time class="time">14:43</time>
      <svg class="ticks" role="img" aria-label="Delivered"><use href="#ticks" /></svg>
      <svg class="tail"><use href="#tail" /></svg>
    </div>

    <div class="message in stacked">
      <p class="text">Hello! How can I assist you today?</p>
      <time class="time">14:43</time>
      <svg class="tail"><use href="#tail" /></svg>
    </div>

    <div class="message out">
      <p class="text">Send 0.5 eth to James</p>
      <time class="time">14:44</time>
      <svg class="ticks" role="img" aria-label="Delivered"><use href="#ticks" /></svg>
      <svg class="tail"><use href="#tail" /></svg>
    </div>

    <div class="message in stacked">
      <p class="text">Insufficient balance. You have 0 ETH</p>
      <time class="time">14:44</time>
      <svg class="tail"><use href="#tail" /></svg>
    </div>
  </main>

  <footer class="composer">
    <button type="button" class="icon-button plus" aria-label="Attach">
      <svg viewBox="0 0 60 60"><path d="M30 2.500V57.500M2.500 30H57.500" /></svg>
    </button>
    <div class="field">
      <input type="text" class="input" aria-label="Message">
      <button type="button" class="icon-button sticker" aria-label="Stickers">
        <svg viewBox="0 0 56 56"><path d="M22 2H36Q54 3 54 20V27Q54 32 50 36L36 50Q31 54 25 54Q2 54 2 34V20Q3 3 22 2ZM53 30H44Q31 31 31 42Q31 50 29 53" /></svg>
      </button>
    </div>
    <button type="button" class="icon-button camera" aria-label="Camera">
      <svg viewBox="0 0 70 56"><path d="M8 9H16Q20 9 22 6Q24 2 28 2H42Q46 2 48 6Q50 9 54 9H62Q68 9 68 15V47Q68 53 62 53H8Q2 53 2 47V15Q2 9 8 9Z" /><circle cx="35" cy="31" r="14" /><circle class="fill" cx="55" cy="20" r="3.500" /></svg>
    </button>
    <button type="button" class="icon-button mic" aria-label="Record voice message">
      <svg viewBox="0 0 48 70"><rect x="13" y="2.500" width="22" height="45" rx="11" /><path d="M2.500 36C2.500 48 12 57 24 57S45.500 48 45.500 36M24 57V67.500" /></svg>
    </button>
  </footer>
</body>

</html>
```
FILE: styles.css
```css
* {
  box-sizing: border-box;
}

body {
  display: flex;
  flex-direction: column;
  height: 100vh;
  margin: 0;
  background: #090909;
  color: #fcfcfc;
  font-family: Inter, "Liberation Sans", sans-serif;
  font-size: 48px;
  line-height: 66px;
}

h1,
h2,
p,
ul {
  margin: 0;
}

.defs {
  position: absolute;
  width: 0;
  height: 0;
}

/* header */

.header {
  display: flex;
  flex: none;
  align-items: center;
  height: 133px;
  padding: 0 40px 2px;
  border-bottom: 1px solid #444546;
  background: linear-gradient(100deg, #252525 0%, #343535 18%, #313232 30%, #2c2d2e 55%, #1e1e1e 76%, #1c1c1c 100%);
}

.back {
  display: flex;
  align-items: center;
  gap: 30px;
  color: inherit;
  text-decoration: none;
}

.back-icon {
  width: 34px;
  height: 58px;
  fill: none;
  stroke: currentColor;
  stroke-width: 8;
  stroke-linecap: round;
  stroke-linejoin: round;
}

.avatar {
  width: 108px;
  height: 108px;
  margin: 0 32px 0 59px;
}

.avatar text {
  font-size: 16px;
  font-weight: 900;
  text-anchor: middle;
  fill: #111;
}

.title {
  font-size: 46px;
  font-weight: 600;
}

/* chat */

.chat {
  position: relative;
  display: flex;
  flex: 1;
  flex-direction: column;
  justify-content: flex-end;
  align-items: flex-start;
  gap: 36px;
  min-height: 0;
  padding: 0 48px 20px;
  overflow: hidden;
}

.wallpaper {
  position: absolute;
  top: 0;
  left: 0;
  width: 100%;
  height: 100%;
}

.doodles {
  fill: none;
  stroke: #222;
  stroke-width: 3;
  stroke-linecap: round;
  stroke-linejoin: round;
}

.doodles path,
.doodles ellipse,
.doodles circle {
  vector-effect: non-scaling-stroke;
}

.doodles .solid {
  fill: #090909;
}

.doodles .dot {
  stroke-width: 7;
}

.wallpaper marker {
  fill: none;
  stroke: #222;
  stroke-width: 3;
}

.rings-s,
.rings-m,
.rings-l {
  stroke: none;
}

.rings-s {
  marker: url(#ring-s);
}

.rings-m {
  marker: url(#ring-m);
}

.rings-l {
  marker: url(#ring-l);
}

.group {
  display: flex;
  flex-direction: column;
  align-items: flex-start;
  gap: 10px;
  width: 100%;
}

.message {
  position: relative;
  display: flex;
  align-items: flex-end;
  padding: 17px 31px 16px;
  border-radius: 36px;
}

.message .text {
  padding-bottom: 6px;
}

.in {
  background: #242527;
}

.out {
  align-self: flex-end;
  background: #254d3a;
}

.stacked {
  flex-direction: column;
  align-items: flex-start;
}

.stacked .time {
  align-self: flex-end;
  margin-top: 10px;
}

.earlier {
  min-width: 77.5%;
}

.overlap {
  display: grid;
  min-width: 79%;
}

.overlap .text,
.overlap .time {
  grid-area: 1 / 1;
}

.overlap .time {
  align-self: end;
  justify-self: end;
}

.time {
  color: #8e8e90;
  font-size: 36px;
  line-height: 41px;
}

.out .time,
.ticks {
  color: #8fa69b;
}

.out .time {
  margin-left: 42px;
}

.ticks {
  width: 48px;
  height: 30px;
  margin: 0 -2px 8px 10px;
}

.tail {
  position: absolute;
  bottom: 0;
  width: 52px;
  height: 62px;
}

.in .tail {
  left: -18px;
  fill: #242527;
  transform: scaleX(-1);
}

.out .tail {
  right: -18px;
  fill: #254d3a;
}

.emoji {
  width: 38px;
  height: 59px;
  margin: -10px 18px 0 13px;
  vertical-align: -10px;
}

.steps {
  margin-top: 12px;
  padding: 0 11px 0 55px;
  list-style: none;
}

.steps li::before {
  content: "";
  float: left;
  width: 12px;
  height: 12px;
  margin: 30px 30px 0 -42px;
  border-radius: 50%;
  background: currentColor;
}

.date {
  position: relative;
  align-self: center;
  margin: 69px 0 3px;
  padding: 0 94px;
  border-radius: 28px;
  background: #171717;
  font-size: 38px;
  font-weight: 600;
  line-height: 60px;
}

/* composer */

.composer {
  display: flex;
  flex: none;
  align-items: center;
  height: 134px;
  padding: 0 51px 0 40px;
  border-top: 1px solid #3c3d3d;
  background: #242625;
}

.icon-button {
  flex: none;
  padding: 0;
  border: 0;
  background: none;
  color: #fcfcfc;
}

.icon-button svg {
  display: block;
  width: 100%;
  fill: none;
  stroke: currentColor;
  stroke-width: 4;
  stroke-linecap: round;
  stroke-linejoin: round;
}

.icon-button .fill {
  fill: currentColor;
  stroke: none;
}

.plus {
  width: 60px;
}

.plus svg,
.mic svg {
  stroke-width: 5;
}

.field {
  display: flex;
  flex: 1;
  align-items: center;
  min-width: 0;
  height: 90px;
  margin: 0 56px 0 41px;
  padding: 0 22px 0 40px;
  border: 1px solid #4d4d4d;
  border-radius: 45px;
  background: #3b3b3b;
}

.input {
  flex: 1;
  min-width: 0;
  height: 66px;
  padding: 0;
  border: 0;
  outline: 0;
  background: none;
  color: inherit;
  font: inherit;
}

.sticker {
  width: 56px;
}

.camera {
  width: 70px;
  margin-right: 57px;
}

.mic {
  width: 48px;
}
```
